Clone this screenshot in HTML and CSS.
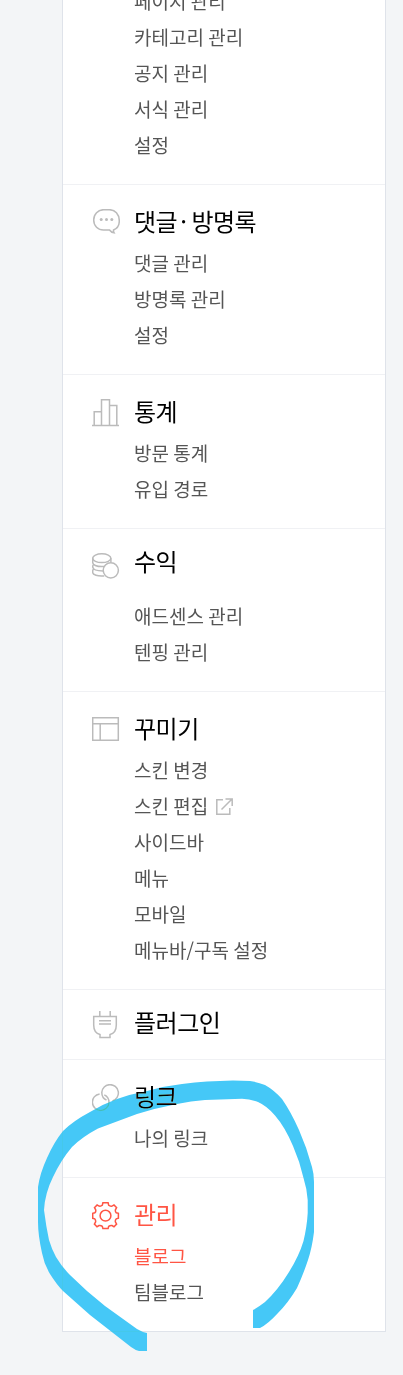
FILE: index.html
```html
<!DOCTYPE html>
<html lang="ko">
<head>
  <meta charset="UTF-8">
  <title>블로그 관리</title>
  <link rel="stylesheet" href="styles.css">
</head>
<body>
  <nav class="menu">
    <section class="group first">
      <ul>
        <li>페이지 관리</li>
        <li>카테고리 관리</li>
        <li>공지 관리</li>
        <li>서식 관리</li>
        <li>설정</li>
      </ul>
    </section>
    <section class="group">
      <div class="head">
        <svg class="icon" viewBox="0 0 28 28"><path d="M21.5 21c3.500-1.300 5.800-4.600 5.800-9 0-7-4.300-11.300-9.800-11.300h-6C6 .7 1.700 5.200 1.700 11s4.300 10 9.800 10h6c1 1.500 2.500 2.400 4.500 2.700-.5-.8-.6-1.600-.5-2.700z"/><g class="dots"><circle cx="9.200" cy="10.500" r="1.500"/><circle cx="14.500" cy="10.500" r="1.500"/><circle cx="19.800" cy="10.500" r="1.500"/></g></svg>
        <h2>댓글<span class="dot">·</span>방명록</h2>
      </div>
      <ul>
        <li>댓글 관리</li>
        <li>방명록 관리</li>
        <li>설정</li>
      </ul>
    </section>
    <section class="group">
      <div class="head">
        <svg class="icon" viewBox="0 0 28 28"><path d="M0 26.400h27M2.200 26V12.700h7.300M9.500 26V.7h8V26M17.500 6.600h7.300V26"/></svg>
        <h2>통계</h2>
      </div>
      <ul>
        <li>방문 통계</li>
        <li>유입 경로</li>
      </ul>
    </section>
    <section class="group profit">
      <div class="head">
        <svg class="icon" viewBox="0 0 28 28"><ellipse cx="9.800" cy="5.200" rx="9.100" ry="4.400"/><path d="M.7 5.200v4.300c0 2.400 4 4.100 9.100 4.100 1.200 0 2.200-.1 3.200-.3M18.900 5.200v4.300M1.500 11.500c-.5.600-.8 1.300-.8 2.200 0 2.600 4 4.300 10.300 4.300M1.500 16c-.5.600-.8 1.300-.8 2.200v1.400c0 2.300 4.800 3.800 11.500 3.300"/><circle cx="18.800" cy="17.300" r="7.600"/></svg>
        <h2>수익</h2>
      </div>
      <ul>
        <li>애드센스 관리</li>
        <li>텐핑 관리</li>
      </ul>
    </section>
    <section class="group">
      <div class="head">
        <svg class="icon" viewBox="0 0 28 28"><path d="M.7 1.700h25.600v22.600H.7zM.7 7.700h25.600M8.200 7.700v16.600"/></svg>
        <h2>꾸미기</h2>
      </div>
      <ul>
        <li>스킨 변경</li>
        <li>스킨 편집 <svg class="out" viewBox="0 0 17 17"><path d="M7 1.700H.8v14.500h13V10M5.500 11.500L15.500 1.500M9.500 1h6.700v7"/></svg></li>
        <li>사이드바</li>
        <li>메뉴</li>
        <li>모바일</li>
        <li>메뉴바/구독 설정</li>
      </ul>
    </section>
    <section class="group plugin">
      <div class="head">
        <svg class="icon" viewBox="0 0 28 28"><path d="M7.800 0v5.500M18.200 0v5.500M1.700 5.500h22.600v8.500c0 5-2.300 8.500-6.300 9.500v3.100H8v-3.100c-4-1-6.300-4.500-6.300-9.500zM7 9.700h12M7 13h12"/></svg>
        <h2>플러그인</h2>
      </div>
    </section>
    <section class="group">
      <div class="head">
        <svg class="icon" viewBox="0 0 28 28"><path d="M20.400 16.900A8.300 8.300 0 1 0 9.800 8.400c0 3.700 1.500 6.200 4.700 7.600M7.600 9.900A8.300 8.300 0 1 0 17 18.500c0-3.700-1.500-6.200-4.700-7.600"/></svg>
        <h2>링크</h2>
      </div>
      <ul>
        <li>나의 링크</li>
      </ul>
    </section>
    <section class="group">
      <div class="head active">
        <svg class="icon" viewBox="0 0 28 28"><path d="M10.900.8h5.200l.6 2.500q1.500 1.300 3.300.8l2-1.100 2.600 2.600-1.200 2.200q-.3 1.800.8 3l2.200.5v5l-2.200.6q-1.200 1.300-.8 3l1.200 2.200-2.600 2.600-2-1.200q-1.800-.3-3.300.8l-.6 2.300h-5.200l-.6-2.300q-1.500-1.200-3.300-.8l-2 1.200-2.600-2.600 1.200-2.200q.3-1.800-.8-3L.7 16.300v-5l2.200-.5q1.200-1.300.8-3L2.500 5.600 5.100 3l2 1.100q1.800.4 3.200-.8z"/><circle cx="13.500" cy="13.700" r="5.400"/></svg>
        <h2>관리</h2>
      </div>
      <ul>
        <li class="active">블로그</li>
        <li>팀블로그</li>
      </ul>
    </section>
  </nav>
  <!-- highlighter stroke over the last groups -->
  <svg class="marker" viewBox="0 0 403 1375"><path d="M147 1351H139Q135 1350 131 1347L90 1315L63 1291Q57 1285 50 1274Q44 1264 42 1253Q38 1235 38 1222V1187Q40 1173 47 1158Q54 1142 63 1131Q73 1121 90 1112Q103 1104 117 1099Q131 1094 147 1091Q164 1086 182 1084Q195 1082 207 1081.500L233 1080.500L250 1081Q258 1082 265 1085Q274 1090 282 1099Q291 1112 299 1130Q307 1148 312 1167Q314 1174 314 1182V1232Q312 1248 308 1260Q303 1275 297 1288Q288 1303 278 1313Q268 1324 260 1328H253V1310Q260 1306 265 1302Q278 1290 289 1272Q299 1256 303.500 1241Q307 1226 307.700 1213V1200Q307 1189 303.500 1178Q300 1162 293 1146Q285 1127 275 1115.500Q267 1106 258 1102Q250 1099 242 1098.700L205 1100Q191 1101 177 1104Q156 1108 137 1114L98 1128.500Q82 1137 72 1147Q61 1160 53 1177Q45 1193 44 1210Q46 1226 49 1240Q52 1250 56 1257Q62 1267 70 1275Q87 1292 105 1306L137 1329Q142 1332 147 1333Z"/></svg>
</body>
</html>
```
FILE: styles.css
```css
body {
  margin: 0;
  height: 1375px;
  position: relative;
  overflow: hidden;
  background: #f3f5f7;
  font-family: "Noto Sans CJK KR", sans-serif;
}
.menu {
  margin: -18px 17px 0 62px;
  border: 1px solid #dfe3ea;
  background: #fff;
}
.group {
  padding-bottom: 20px;
  border-top: 1px solid #f0f1f4;
}
.first {
  padding-bottom: 21px;
  border-top: none;
}
.head {
  display: flex;
  height: 60px;
  padding-left: 29px;
  box-sizing: border-box;
}
.icon {
  width: 28px;
  height: 28px;
  margin: 24px 14px 0 0;
  fill: none;
  stroke: #bbb;
  stroke-width: 1.5;
}
.dots {
  fill: #bbb;
  stroke: none;
}
h2 {
  margin: 18px 0 0;
  font-size: 24px;
  font-weight: 400;
  line-height: 36px;
  letter-spacing: -0.5px;
  color: #000;
}
.dot { margin: 0 5px 0 3px; }
ul {
  list-style: none;
  margin: 0;
  padding: 0 0 1px 71px;
}
.first ul { padding-bottom: 0; }
li {
  height: 36px;
  font-size: 19px;
  line-height: 36px;
  word-spacing: -1px;
  color: #555;
}
.out {
  width: 17px;
  height: 17px;
  margin-left: 3px;
  vertical-align: -1px;
  fill: none;
  stroke: #bbb;
  stroke-width: 1.5;
}
.profit .head { height: 69px; }
.profit h2 { margin-top: 14px; }
.plugin { padding-bottom: 9px; }
.plugin .icon { margin-top: 21px; }
.plugin h2 { margin-top: 14px; }
.active h2, li.active { color: #ff5544; }
.active .icon { stroke: #ff5544; }
.marker {
  position: absolute;
  top: 0;
  left: 0;
  width: 403px;
  height: 1375px;
  fill: #45c8f7;
  mix-blend-mode: darken;
}
```
